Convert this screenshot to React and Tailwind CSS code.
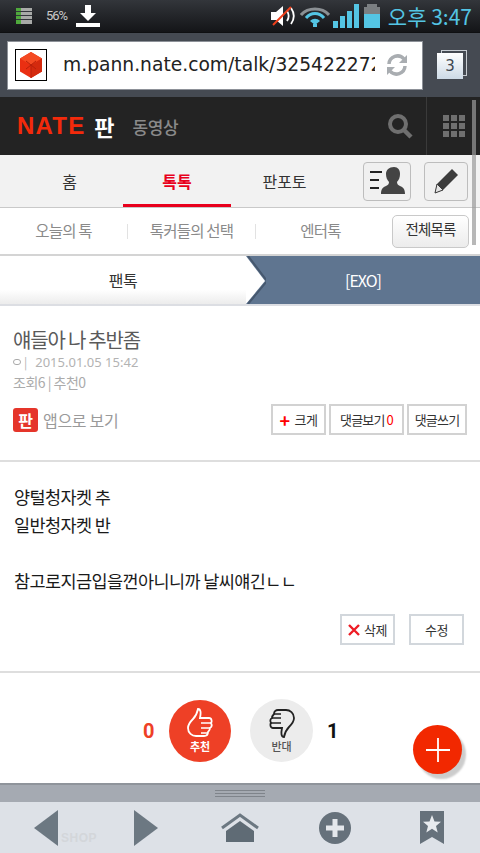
const KR = { fontFamily: '"Noto Sans CJK KR", "Noto Sans", sans-serif' };

function StatusBar() {
  return (
    <div className="flex h-[32px] items-center bg-gradient-to-b from-[#33363b] to-[#141518] pl-[16px] pr-[8px]">
      <svg width="17" height="17" viewBox="0 0 17 17" className="mr-[13px]">
        <rect x="0" y="0" width="16" height="16" fill="#a8aaa8" />
        <rect x="0" y="0" width="5" height="16" fill="#4fa93c" />
        <path d="M0 3.5h16M0 7.5h16M0 11.5h16" stroke="#33363b" strokeWidth="1" />
      </svg>
      <span className="text-[13px] tracking-[-1px] text-[#c9c9c9]" style={{ fontFamily: '"Roboto", sans-serif' }}>56%</span>
      <svg width="24" height="24" viewBox="0 0 24 24" className="ml-[9px]">
        <path d="M9 1h6v8h5l-8 8-8-8h5z" fill="#fff" />
        <rect x="0" y="19" width="24" height="4" fill="#fff" />
      </svg>
      <div className="flex-1" />
      <svg width="27" height="24" viewBox="0 0 27 24" className="mr-[3px]">
        <path d="M1 8h5l7-6v20l-7-6H1z" fill="#fff" />
        <path d="M17 7c2 3 2 7 0 10M21 4c3.500 5 3.500 11 0 16" stroke="#fff" strokeWidth="1.800" fill="none" />
        <path d="M3 21L21 3" stroke="#f0401c" strokeWidth="2" />
      </svg>
      <svg width="30" height="24" viewBox="0 0 30 24" className="mr-[3px]">
        <path d="M1 11C8 3 22 3 29 11" stroke="#8b9094" strokeWidth="3" fill="none" />
        <path d="M6 14C11 8 19 8 24 14" stroke="#54c5e4" strokeWidth="3" fill="none" />
        <path d="M10 17c3-3 7-3 10 0l-5 4z" fill="#54c5e4" />
        <rect x="13" y="20" width="4" height="3" fill="#54c5e4" />
      </svg>
      <div className="mr-[5px] flex items-end gap-[2px]">
        <div className="h-[7px] w-[5px] bg-[#54c5e4]" />
        <div className="h-[12px] w-[5px] bg-[#54c5e4]" />
        <div className="h-[17px] w-[5px] bg-[#54c5e4]" />
        <div className="h-[24px] w-[5px] bg-[#54c5e4]" />
      </div>
      <div className="mr-[8px] flex flex-col items-center">
        <div className="h-[3px] w-[10px] bg-[#7b7f82]" />
        <div className="flex h-[21px] w-[16px] flex-col">
          <div className="h-[7px] bg-[#7b7f82]" />
          <div className="flex-1 bg-[#54c5e4]" />
        </div>
      </div>
      <span className="text-[21px] leading-none text-[#54c5e4]" style={KR}>오후 3:47</span>
    </div>
  );
}

function UrlBar() {
  return (
    <div className="flex h-[65px] items-center border-t border-[#0f1012] bg-[#454a52] pl-[7px] pr-[6px]">
      <div className="flex h-[49px] w-[416px] items-center border border-[#8d9198] bg-white pl-[7px] pr-[12px]">
        <div className="flex h-[32px] w-[32px] shrink-0 items-center justify-center border border-black bg-white">
          <svg width="24" height="26" viewBox="0 0 24 26">
            <path d="M12 0l11 6.500v13L12 26 1 19.500v-13z" fill="#ea2f12" />
            <path d="M12 0l11 6.500-11 6.500L1 6.500z" fill="#f44a22" />
            <path d="M12 13l11-6.500v13L12 26z" fill="#d42a0e" />
            <path d="M7 9l5 4 5-4M7 17l5-4 5 4M12 13v13" stroke="#b8200a" strokeWidth="1" fill="none" />
          </svg>
        </div>
        <div className="ml-[16px] w-[312px] overflow-hidden whitespace-nowrap text-[18.700px] leading-none text-[#222]" style={{ fontFamily: '"DejaVu Sans", sans-serif' }}>
          m.pann.nate.com/talk/325422272
        </div>
        <svg width="24" height="24" viewBox="0 0 24 24" className="ml-[10px] shrink-0">
          <path d="M4 11a8.500 8.500 0 0 1 15-5" stroke="#a9adb1" strokeWidth="3.500" fill="none" />
          <path d="M22 2v8h-8z" fill="#a9adb1" />
          <path d="M20 13a8.500 8.500 0 0 1-15 5" stroke="#a9adb1" strokeWidth="3.500" fill="none" />
          <path d="M2 22v-8h8z" fill="#a9adb1" />
        </svg>
      </div>
      <div className="relative ml-[14px] h-[30px] w-[30px]">
        <div className="absolute right-0 top-0 h-[26px] w-[26px] border border-[#c7ccd2]" />
        <div className="absolute bottom-[1px] left-0 flex h-[26px] w-[26px] items-center justify-center bg-gradient-to-b from-white to-[#cddae6] text-[15px] text-[#3d4650]" style={{ fontFamily: '"DejaVu Sans", sans-serif' }}>
          3
        </div>
      </div>
    </div>
  );
}

function NateHeader() {
  return (
    <div className="flex h-[58px] items-center bg-[#232323] pl-[17px]" style={KR}>
      <span className="text-[24px] font-bold leading-none tracking-[1.2px] text-[#f32a0b]" style={{ fontFamily: '"Liberation Sans", sans-serif' }}>NATE</span>
      <span className="ml-[9px] text-[22px] font-bold leading-none text-white">판</span>
      <span className="ml-[18px] text-[17px] font-medium leading-none tracking-[-0.5px] text-[#8a8a8a]">동영상</span>
      <div className="flex-1" />
      <svg width="26" height="26" viewBox="0 0 26 26" className="mr-[13px]">
        <circle cx="11" cy="11" r="8" stroke="#6f6f6f" strokeWidth="4" fill="none" />
        <path d="M17 17l7 7" stroke="#6f6f6f" strokeWidth="4.500" />
      </svg>
      <div className="flex h-full w-[54px] items-center justify-center border-l border-[#3a3a3a]">
        <div className="grid grid-cols-3 gap-[2px]">
          {[0, 1, 2, 3, 4, 5, 6, 7, 8].map((n) => (
            <div key={n} className="h-[6px] w-[6px] bg-[#6f6f6f]" />
          ))}
        </div>
      </div>
    </div>
  );
}

function MainTabs() {
  return (
    <div className="flex h-[53px] items-center border-b border-[#c9c9c9] bg-[#f2f2f2]" style={KR}>
      <div className="flex h-full w-[123px] items-center justify-center pl-[16px] text-[16px] text-[#333]">홈</div>
      <div className="flex h-full w-[108px] items-center justify-center border-b-[3px] border-[#e8001c] pt-[3px] text-[16px] font-bold text-[#e8001c]">톡톡</div>
      <div className="flex h-full w-[107px] items-center justify-center text-[16px] text-[#333]">판포토</div>
      <div className="ml-[25px] flex h-[39px] w-[48px] items-center justify-center rounded-[4px] border border-[#bdbdbd] bg-[#f0f0f0]">
        <svg width="36" height="28" viewBox="0 0 36 28">
          <path d="M1 5h12M1 13h9M1 21h9" stroke="#222" strokeWidth="2" />
          <path d="M25 0c4 0 6 3 6 7 0 3-1 6-3 8 0 2 1 3 3 4 3 1 5 3 5 8H12c0-5 2-7 5-8 2-1 3-2 3-4-2-2-3-5-3-8 0-4 3-7 8-7z" fill="#444" />
        </svg>
      </div>
      <div className="ml-[13px] flex h-[39px] w-[44px] items-center justify-center rounded-[4px] border border-[#bdbdbd] bg-[#f0f0f0]">
        <svg width="28" height="28" viewBox="0 0 28 28">
          <path d="M20 2l6 6-15 15-8 3 2-9z" fill="#3c3c3c" />
          <path d="M5 17l6 6-8 3z" fill="#e4e4e4" stroke="#3c3c3c" strokeWidth="1" />
        </svg>
      </div>
    </div>
  );
}

function SubNav() {
  return (
    <div className="flex h-[48px] items-center border-b-2 border-[#d4d4d4] bg-white text-[15.500px] tracking-[-0.8px] text-[#8a8a8a]" style={KR}>
      <div className="w-[127px] text-center">오늘의 톡</div>
      <div className="h-[15px] w-px bg-[#e2e2e2]" />
      <div className="w-[127px] text-center">톡커들의 선택</div>
      <div className="h-[15px] w-px bg-[#e2e2e2]" />
      <div className="w-[129px] text-center">엔터톡</div>
      <div className="ml-[7px] flex h-[33px] w-[77px] items-center justify-center rounded-[5px] border border-[#c9c9c9] bg-gradient-to-b from-white to-[#ececec] pb-[5px] text-[14.500px] text-[#333]">전체목록</div>
    </div>
  );
}

function Breadcrumb() {
  return (
    <div className="relative flex h-[50px] border-b-2 border-[#dcdee3]" style={KR}>
      <div className="flex w-[246px] items-center justify-center bg-gradient-to-b from-white from-70% to-[#ececec] text-[16px] tracking-[-0.5px] text-[#333]">팬톡</div>
      <div className="flex flex-1 items-center justify-center bg-[#5f7590] text-[16px] tracking-[-1px] text-white">[EXO]</div>
      <svg width="20" height="48" viewBox="0 0 20 48" className="absolute left-[246px] top-0">
        <path d="M0 0l19 25L0 48z" fill="#fff" />
        <path d="M2 0l19 25L2 48" stroke="#46586e" strokeWidth="2" fill="none" />
      </svg>
    </div>
  );
}

function PostHead() {
  return (
    <div className="h-[156px] border-b-2 border-[#dedede] px-[13px] pt-[20px]" style={KR}>
      <div className="text-[20px] leading-[28px] tracking-[-1.2px] text-[#5a5a5a]">얘들아 나 추반좀</div>
      <div className="flex items-center text-[13px] leading-[16px] text-[#b3b3b3]">
        <span className="mr-[3px] h-[6px] w-[8px] rounded-full border border-[#aaa]" />
        <span className="mr-[8px] text-[12px]">|</span>
        <span style={{ fontFamily: '"Noto Sans", sans-serif' }}>2015.01.05 15:42</span>
      </div>
      <div className="mt-[3px] text-[14px] leading-[18px] tracking-[-0.5px] text-[#ababab]">조회6 | 추천0</div>
      <div className="mt-[13px] flex items-center">
        <div className="flex h-[24px] w-[25px] items-center justify-center rounded-[3px] bg-[#e5352a] text-[16px] font-bold leading-none text-white">판</div>
        <span className="ml-[5px] text-[16px] tracking-[-0.3px] text-[#9a9a9a]">앱으로 보기</span>
        <div className="flex-1" />
        <div className="flex h-[31px] w-[55px] items-center justify-center border-2 border-[#d2d2d2] text-[13px] tracking-[-0.5px] text-[#333]">
          <span className="mr-[5px] text-[18px] font-bold leading-none text-[#f00]">+</span>크게
        </div>
        <div className="ml-[3px] flex h-[31px] w-[75px] items-center justify-center border-2 border-[#d2d2d2] text-[13px] tracking-[-0.8px] text-[#333]">
          댓글보기<span className="ml-[2px] text-[#f00]">0</span>
        </div>
        <div className="ml-[3px] flex h-[31px] w-[60px] items-center justify-center border-2 border-[#d2d2d2] text-[13px] tracking-[-0.8px] text-[#333]">댓글쓰기</div>
      </div>
    </div>
  );
}

function PostBody() {
  return (
    <div className="h-[211px] border-b-2 border-[#dedede] px-[14px] pt-[21px]" style={KR}>
      <div className="text-[17.500px] leading-[28px] tracking-[-0.6px] text-[#1a1a1a]">
        <p>양털청자켓 추</p>
        <p>일반청자켓 반</p>
        <p className="mt-[28px]">참고로지금입을껀아니니까 날씨얘긴ㄴㄴ</p>
      </div>
      <div className="mr-[2px] mt-[19px] flex justify-end">
        <div className="flex h-[31px] w-[55px] items-center justify-center border-2 border-[#d2d7dc] text-[13px] tracking-[-0.5px] text-[#333]">
          <svg width="12" height="12" viewBox="0 0 12 12" className="mr-[4px]">
            <path d="M1 1l10 10M11 1L1 11" stroke="#ee1c25" strokeWidth="2.400" />
          </svg>
          삭제
        </div>
        <div className="ml-[14px] flex h-[31px] w-[55px] items-center justify-center border-2 border-[#d2d7dc] text-[13px] tracking-[-0.5px] text-[#333]">수정</div>
      </div>
    </div>
  );
}

function Votes() {
  return (
    <div className="flex items-center pl-[143px] pt-[26px]" style={KR}>
      <span className="w-[26px] text-[20px] font-bold leading-none text-[#ee4026]" style={{ fontFamily: '"Roboto", sans-serif' }}>0</span>
      <div className="flex h-[62px] w-[62px] flex-col items-center justify-center rounded-full bg-[#ee4026]">
        <svg width="28" height="30" viewBox="0 0 28 30">
          <path d="M12 1c3 0 3 4 2 9h9c3 0 3 4 2 5 1 2 1 4-1 5 0 2-1 3-2 4 0 3-2 4-4 4h-8c-4 0-8-3-8-8 0-4 2-6 5-9 2-2 4-5 5-10z" fill="none" stroke="#fff" strokeWidth="1.800" />
          <path d="M15 15h10M15 20h9M15 25h7" stroke="#fff" strokeWidth="1.500" />
        </svg>
        <span className="mt-[1px] text-[11px] font-bold leading-[14px] text-white">추천</span>
      </div>
      <div className="ml-[19px] flex h-[63px] w-[63px] flex-col items-center justify-center rounded-full bg-[#ececec]">
        <svg width="28" height="30" viewBox="0 0 28 30">
          <path d="M16 29c-3 0-3-4-2-9H5C2 20 2 16 3 15c-1-2-1-4 1-5 0-2 1-3 2-4 0-3 2-4 4-4h8c4 0 8 3 8 8 0 4-2 6-5 9-2 2-4 5-5 10z" fill="none" stroke="#222" strokeWidth="1.800" />
          <path d="M3 15h10M4 10h9M6 6h7" stroke="#222" strokeWidth="1.500" />
        </svg>
        <span className="mt-[1px] text-[11px] font-medium leading-[14px] text-[#555]">반대</span>
      </div>
      <span className="ml-[14px] text-[20px] font-bold leading-none text-[#111]" style={{ fontFamily: '"Roboto", sans-serif' }}>1</span>
    </div>
  );
}

function BottomBar() {
  return (
    <div>
      <div className="flex h-[19px] items-center justify-center border-t-2 border-[#8f949b] bg-[#a5aab2]">
        <div className="flex w-[50px] flex-col gap-[2px]">
          <div className="h-px bg-[#7f848b]" />
          <div className="h-px bg-[#7f848b]" />
          <div className="h-px bg-[#7f848b]" />
        </div>
      </div>
      <div className="relative flex h-[51px] items-center bg-[#dde1e7]">
        <span className="absolute left-[61px] top-[27px] text-[12px] font-bold tracking-[0.5px] text-[#d3d6da]" style={{ fontFamily: '"Liberation Sans", sans-serif' }}>SHOP</span>
        <svg width="24" height="36" viewBox="0 0 24 36" className="relative ml-[34px]">
          <path d="M24 0v36L0 18z" fill="#6c7882" />
        </svg>
        <svg width="24" height="36" viewBox="0 0 24 36" className="ml-[76px]">
          <path d="M0 0v36l24-18z" fill="#6c7882" />
        </svg>
        <svg width="38" height="30" viewBox="0 0 38 30" className="ml-[63px]">
          <path d="M1 15L19 2l18 13" stroke="#6c7882" strokeWidth="3" fill="none" />
          <path d="M5 18L19 8l14 10v11H5z" fill="#5f6b75" />
        </svg>
        <div className="ml-[60px] flex h-[32px] w-[32px] items-center justify-center rounded-full bg-[#66717b]">
          <svg width="20" height="20" viewBox="0 0 20 20">
            <path d="M10 1v18M1 10h18" stroke="#e4e7eb" strokeWidth="5" />
          </svg>
        </div>
        <svg width="24" height="33" viewBox="0 0 24 33" className="ml-[69px]">
          <path d="M0 0h24v33l-12-7-12 7z" fill="#66717b" />
          <path d="M12 4l2.500 6.500 6.500.3-5 4.200 1.700 6.500-5.700-3.700-5.700 3.700L8 15l-5-4.200 6.500-.3z" fill="#e8ebef" />
        </svg>
      </div>
    </div>
  );
}

export default function App() {
  return (
    <div className="relative flex h-[853px] w-[480px] flex-col overflow-hidden bg-white">
      <StatusBar />
      <UrlBar />
      <NateHeader />
      <MainTabs />
      <SubNav />
      <Breadcrumb />
      <div className="flex-1 overflow-hidden bg-white">
        <PostHead />
        <PostBody />
        <Votes />
      </div>
      <BottomBar />

      {/* floating bits */}
      <div className="absolute left-[472px] top-[100px] h-[145px] w-[4px] bg-[#9a9a9a]/70" />
      <div className="absolute left-[413px] top-[725px] flex h-[49px] w-[49px] items-center justify-center rounded-full bg-[#f22800] shadow-[4px_5px_2px_rgba(0,0,0,0.2)]">
        <svg width="24" height="24" viewBox="0 0 24 24">
          <path d="M12 0v24M0 12h24" stroke="#fff" strokeWidth="1.800" />
        </svg>
      </div>
    </div>
  );
}
